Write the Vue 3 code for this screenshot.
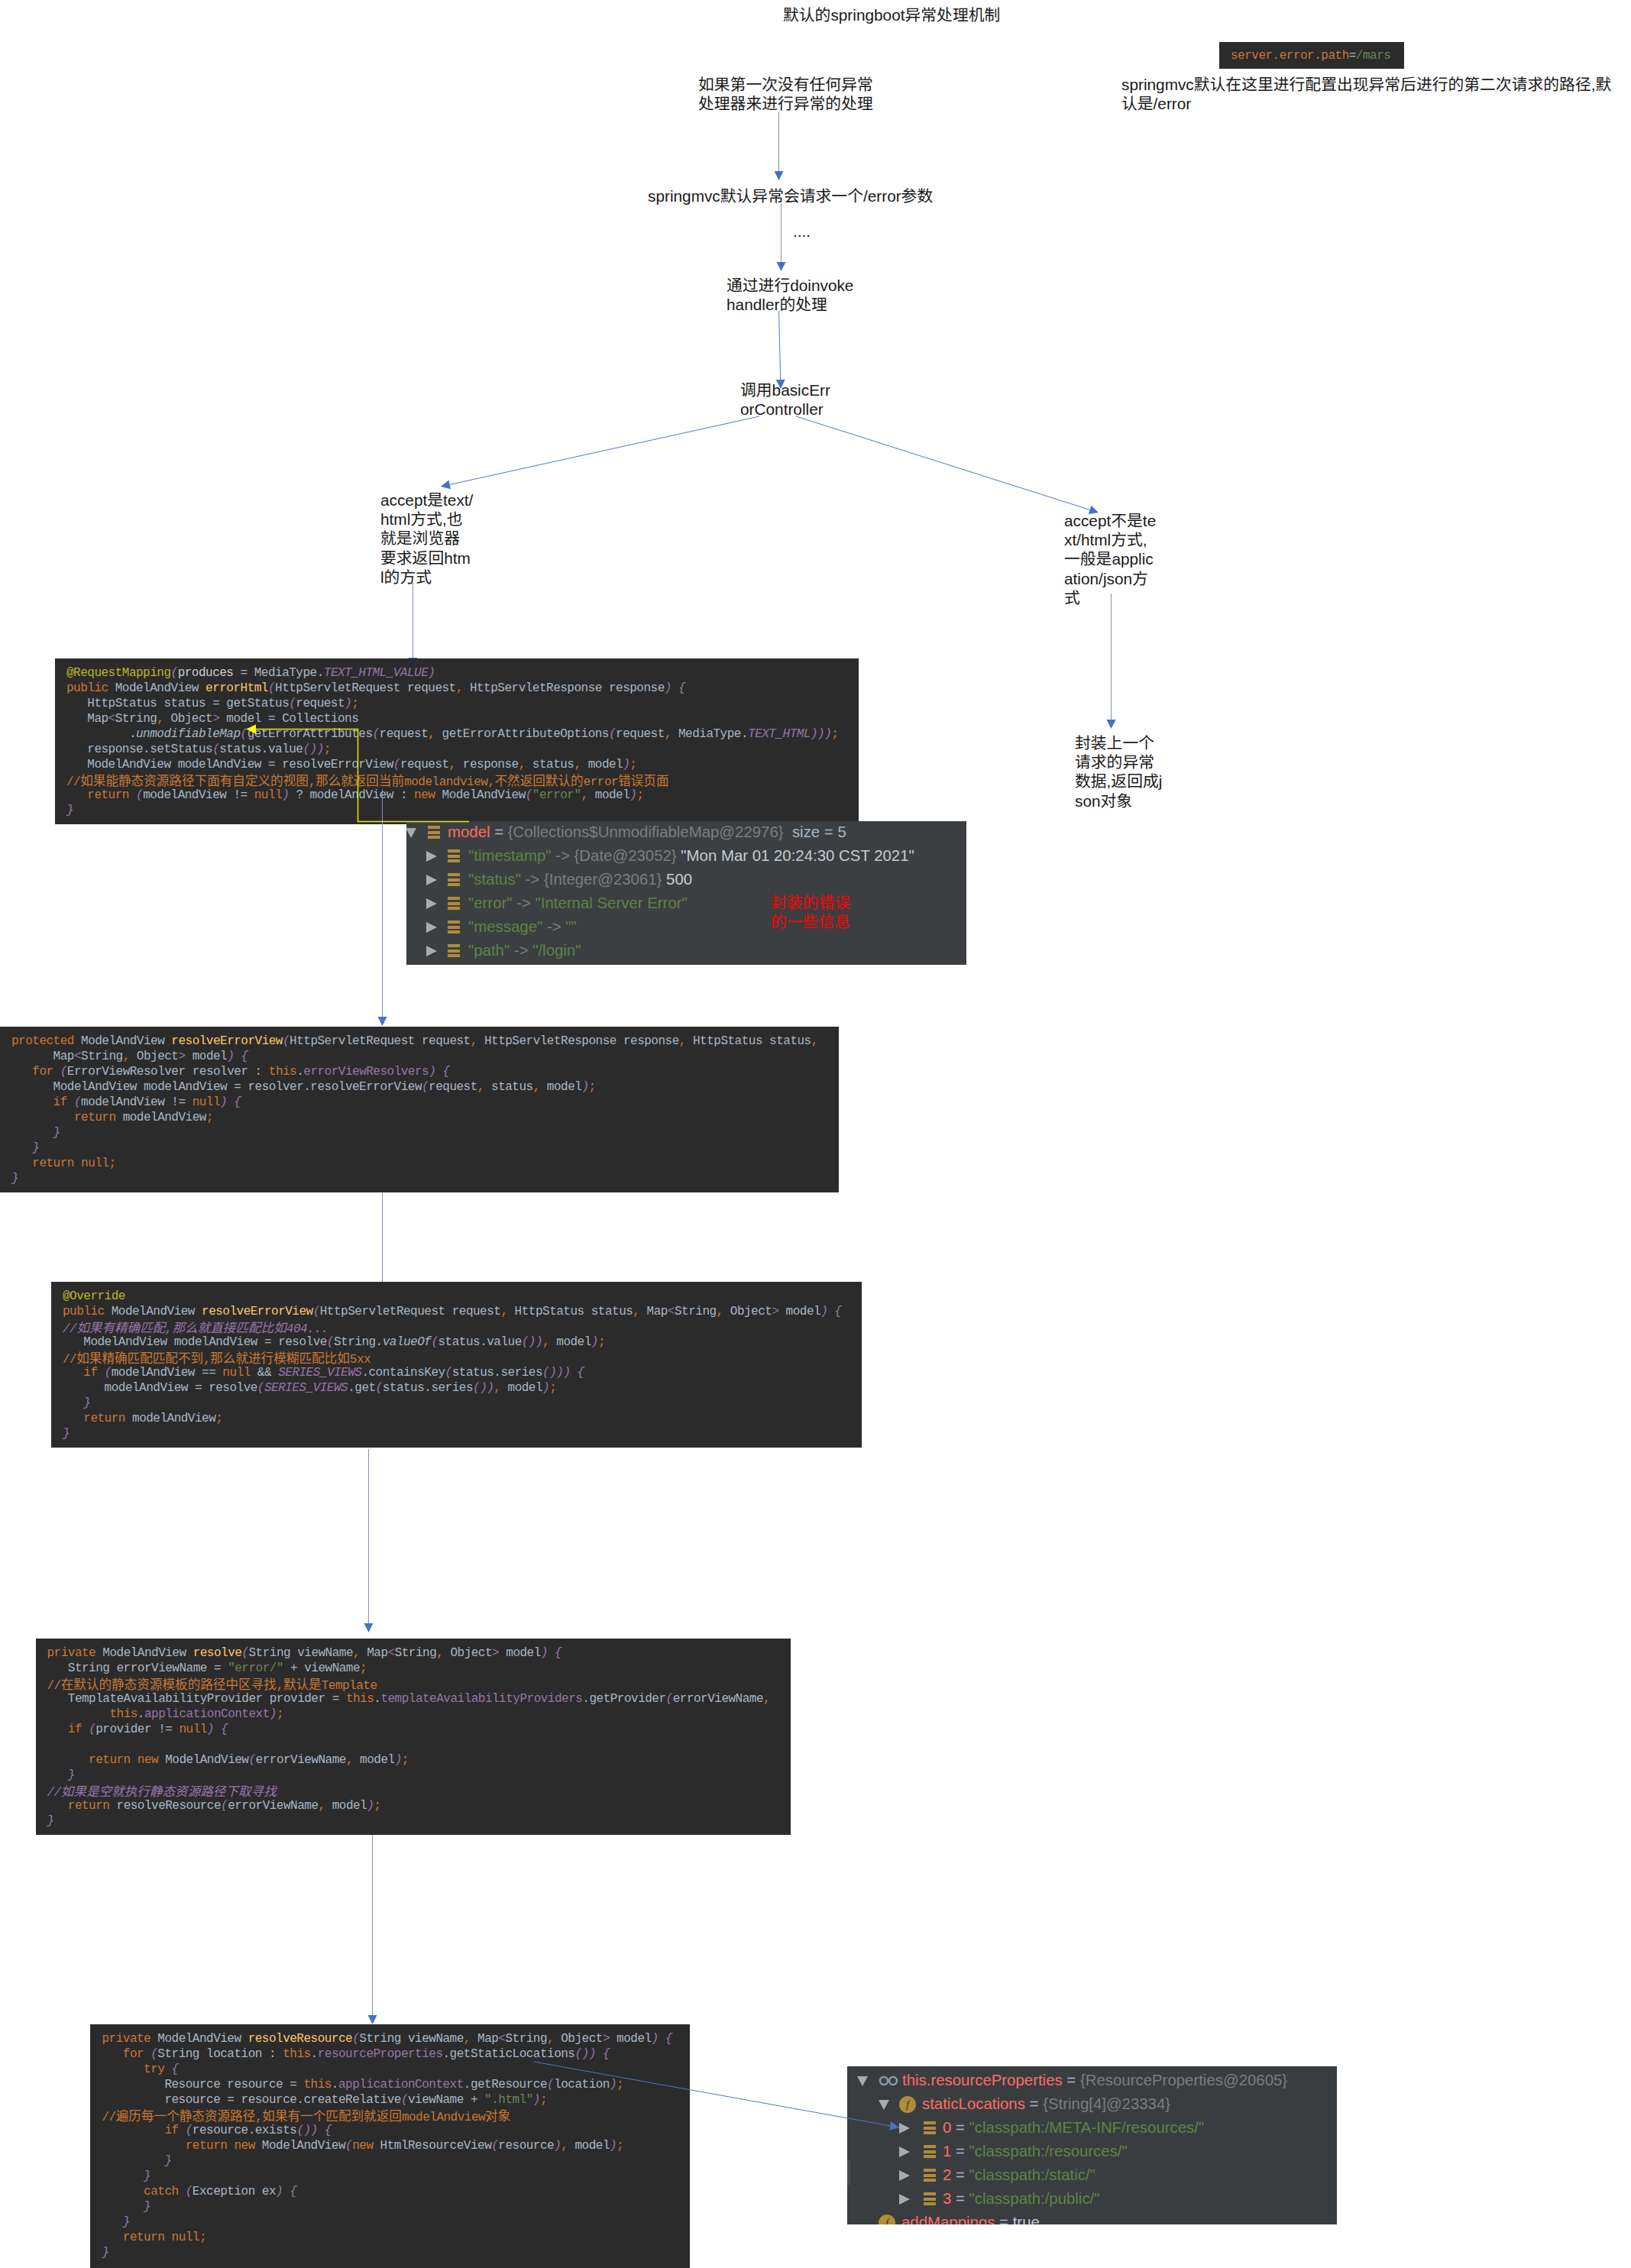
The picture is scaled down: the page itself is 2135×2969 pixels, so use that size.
<script setup>
const KW = 'public|private|protected|for|if|try|catch|return|new|null|this'
const RE = new RegExp(`§(\\w):([^§]*)§|"[^"]*"|\\b(?:${KW})\\b|@\\w+|[,;]|[(){}<>]|[\\u4e00-\\u9fff]+`, 'g')

function tokenize(src) {
  let base = 't'
  let text = src
  if (src.startsWith('#/')) { base = 'd'; text = src.slice(1) }
  else if (src.startsWith('//')) { base = 'c' }
  const out = []
  let last = 0
  const push = (cls, v) => { if (v) out.push({ cls, v }) }
  for (const m of text.matchAll(RE)) {
    push(base, text.slice(last, m.index))
    last = m.index + m[0].length
    const s = m[0]
    if (m[1]) push(m[1], m[2])
    else if (/^[\u4e00-\u9fff]/.test(s)) push(base + ' cjk', s)
    else if (base !== 't') push(base, s)
    else if (s[0] === '"') push('s', s)
    else if (s[0] === '@') push('a', s)
    else if (/^[(){}<>]$/.test(s)) push('p', s)
    else push('k', s)
  }
  push(base, text.slice(last))
  return out
}

const rawBlocks = [
  { id: 'b1', lines: [
    '@RequestMapping(§n:produces§ = MediaType.§f:TEXT_HTML_VALUE§)',
    'public ModelAndView §m:errorHtml§(HttpServletRequest request, HttpServletResponse response) {',
    '   HttpStatus status = getStatus(request);',
    '   Map<String, Object> model = Collections',
    '         .§i:unmodifiableMap§(getErrorAttributes(request, getErrorAttributeOptions(request, MediaType.§f:TEXT_HTML§)));',
    '   response.setStatus(status.value());',
    '   ModelAndView modelAndView = resolveErrorView(request, response, status, model);',
    '//如果能静态资源路径下面有自定义的视图,那么就返回当前modelandview,不然返回默认的error错误页面',
    '   return (modelAndView != null) ? modelAndView : new ModelAndView("error", model);',
    '}'
  ] },
  { id: 'b2', lines: [
    'protected ModelAndView §m:resolveErrorView§(HttpServletRequest request, HttpServletResponse response, HttpStatus status,',
    '      Map<String, Object> model) {',
    '   for (ErrorViewResolver resolver : this.§v:errorViewResolvers§) {',
    '      ModelAndView modelAndView = resolver.resolveErrorView(request, status, model);',
    '      if (modelAndView != null) {',
    '         return modelAndView;',
    '      }',
    '   }',
    '   return null;',
    '}'
  ] },
  { id: 'b3', lines: [
    '@Override',
    'public ModelAndView §m:resolveErrorView§(HttpServletRequest request, HttpStatus status, Map<String, Object> model) {',
    '#//如果有精确匹配,那么就直接匹配比如404...',
    '   ModelAndView modelAndView = resolve(String.§i:valueOf§(status.value()), model);',
    '//如果精确匹配匹配不到,那么就进行模糊匹配比如5xx',
    '   if (modelAndView == null && §f:SERIES_VIEWS§.containsKey(status.series())) {',
    '      modelAndView = resolve(§f:SERIES_VIEWS§.get(status.series()), model);',
    '   }',
    '   return modelAndView;',
    '}'
  ] },
  { id: 'b4', lines: [
    'private ModelAndView §m:resolve§(String viewName, Map<String, Object> model) {',
    '   String errorViewName = "error/" + viewName;',
    '//在默认的静态资源模板的路径中区寻找,默认是Template',
    '   TemplateAvailabilityProvider provider = this.§v:templateAvailabilityProviders§.getProvider(errorViewName,',
    '         this.§v:applicationContext§);',
    '   if (provider != null) {',
    ' ',
    '      return new ModelAndView(errorViewName, model);',
    '   }',
    '#//如果是空就执行静态资源路径下取寻找',
    '   return resolveResource(errorViewName, model);',
    '}'
  ] },
  { id: 'b5', lines: [
    'private ModelAndView §m:resolveResource§(String viewName, Map<String, Object> model) {',
    '   for (String location : this.§v:resourceProperties§.getStaticLocations()) {',
    '      try {',
    '         Resource resource = this.§v:applicationContext§.getResource(location);',
    '         resource = resource.createRelative(viewName + ".html");',
    '//遍历每一个静态资源路径,如果有一个匹配到就返回modelAndview对象',
    '         if (resource.exists()) {',
    '            return new ModelAndView(new HtmlResourceView(resource), model);',
    '         }',
    '      }',
    '      catch (Exception ex) {',
    '      }',
    '   }',
    '   return null;',
    '}'
  ] }
]
const blocks = rawBlocks.map(b => ({ id: b.id, lines: b.lines.map(tokenize) }))

const notes = [
  { id: 'n-title', lines: ['默认的springboot异常处理机制'] },
  { id: 'n-first', lines: ['如果第一次没有任何异常', '处理器来进行异常的处理'] },
  { id: 'n-config', lines: ['springmvc默认在这里进行配置出现异常后进行的第二次请求的路径,默', '认是/error'] },
  { id: 'n-request', lines: ['springmvc默认异常会请求一个/error参数'] },
  { id: 'n-dots', lines: ['....'] },
  { id: 'n-invoke', lines: ['通过进行doinvoke', 'handler的处理'] },
  { id: 'n-basic', lines: ['调用basicErr', 'orController'] },
  { id: 'n-html', lines: ['accept是text/', 'html方式,也', '就是浏览器', '要求返回htm', 'l的方式'] },
  { id: 'n-json', lines: ['accept不是te', 'xt/html方式,', '一般是applic', 'ation/json方', '式'] },
  { id: 'n-wrap', lines: ['封装上一个', '请求的异常', '数据,返回成j', 'son对象'] }
]

const modelRows = [
  { depth: 'd0', open: true, icon: 'bars', parts: [['red', 'model'], ['eq', ' = '], ['dim', '{Collections$UnmodifiableMap@22976}'], ['eq', '  size = 5']] },
  { depth: 'd1', icon: 'bars', parts: [['grn', '"timestamp"'], ['dim', ' -> {Date@23052} '], ['wht', '"Mon Mar 01 20:24:30 CST 2021"']] },
  { depth: 'd1', icon: 'bars', parts: [['grn', '"status"'], ['dim', ' -> {Integer@23061} '], ['wht', '500']] },
  { depth: 'd1', icon: 'bars', parts: [['grn', '"error"'], ['dim', ' -> '], ['grn', '"Internal Server Error"']] },
  { depth: 'd1', icon: 'bars', parts: [['grn', '"message"'], ['dim', ' -> '], ['grn', '""']] },
  { depth: 'd1', icon: 'bars', parts: [['grn', '"path"'], ['dim', ' -> '], ['grn', '"/login"']] }
]
const resourceRows = [
  { depth: 'r0', open: true, icon: 'glasses', parts: [['red', 'this.resourceProperties'], ['eq', ' = '], ['dim', '{ResourceProperties@20605}']] },
  { depth: 'r1', open: true, icon: 'f', parts: [['red', 'staticLocations'], ['eq', ' = '], ['dim', '{String[4]@23334}']] },
  { depth: 'r2', icon: 'bars', parts: [['red', '0'], ['eq', ' = '], ['grn', '"classpath:/META-INF/resources/"']] },
  { depth: 'r2', icon: 'bars', parts: [['red', '1'], ['eq', ' = '], ['grn', '"classpath:/resources/"']] },
  { depth: 'r2', icon: 'bars', parts: [['red', '2'], ['eq', ' = '], ['grn', '"classpath:/static/"']] },
  { depth: 'r2', icon: 'bars', parts: [['red', '3'], ['eq', ' = '], ['grn', '"classpath:/public/"']] },
  { depth: 'r1', leaf: true, icon: 'f', parts: [['red', 'addMappings'], ['eq', ' = '], ['wht', 'true']] }
]

function arrow(x1, y1, x2, y2, head = true, strong = false, len = 12, half = 6) {
  const dx = x2 - x1, dy = y2 - y1
  const d = Math.hypot(dx, dy) || 1
  const ux = dx / d, uy = dy / d
  const bx = x2 - ux * len, by = y2 - uy * len
  const pts = [
    [x2, y2],
    [bx - uy * half, by + ux * half],
    [bx + uy * half, by - ux * half]
  ].map(p => p.join(',')).join(' ')
  return { x1, y1, x2: head ? bx : x2, y2: head ? by : y2, pts: head ? pts : '', strong }
}

const under = [
  arrow(1019.5, 147, 1019.5, 236),
  arrow(1022.5, 266, 1022.5, 355),
  arrow(1019.5, 407, 1022, 509, true, true),
  arrow(994, 545, 577, 637, true, true),
  arrow(1042, 545, 1438, 671, true, true),
  arrow(540.5, 763, 540.5, 873),
  arrow(1454.5, 777, 1454.5, 954),
  arrow(500.5, 1033, 500.5, 1343),
  arrow(500.5, 1561, 500.5, 1678, false),
  arrow(482.5, 1897, 482.5, 2137),
  arrow(487.5, 2402, 487.5, 2650)
]
const over = [arrow(699, 2699, 1177, 2785, true, true)]
</script>

<template>
  <div class="canvas">
    <svg class="layer under" width="2135" height="2969" viewBox="0 0 2135 2969">
      <g v-for="(a, i) in under" :key="i">
        <line :x1="a.x1" :y1="a.y1" :x2="a.x2" :y2="a.y2" class="wire" :class="{ strong: a.strong }" />
        <polygon v-if="a.pts" :points="a.pts" class="head" />
      </g>
    </svg>

    <div v-for="n in notes" :key="n.id" class="note" :class="n.id">
      <div v-for="(l, i) in n.lines" :key="i">{{ l }}</div>
    </div>

    <div class="server">
      <span class="sv-k">server.error.path</span><span class="sv-e">=</span><span class="sv-v">/mars</span>
    </div>

    <div v-for="b in blocks" :key="b.id" class="code" :class="b.id">
      <div v-for="(line, i) in b.lines" :key="i" class="ln">
        <span v-for="(t, j) in line" :key="j" :class="t.cls">{{ t.v }}</span>
      </div>
    </div>

    <div class="panel model-panel">
      <div v-for="(r, i) in modelRows" :key="i" class="row" :class="r.depth">
        <svg class="tri" width="14" height="14" viewBox="0 0 14 14">
          <polygon v-if="r.open" points="0,1 14,1 7,14" />
          <polygon v-else points="0,0 14,7 0,14" />
        </svg>
        <span class="bars"><i></i><i></i><i></i></span>
        <span class="txt"><span v-for="(p, j) in r.parts" :key="j" :class="p[0]">{{ p[1] }}</span></span>
      </div>
      <div class="red-note">封装的错误<br />的一些信息</div>
    </div>

    <div class="panel resource-panel">
      <span class="strip"></span>
      <div v-for="(r, i) in resourceRows" :key="i" class="row" :class="r.depth">
        <svg v-if="!r.leaf" class="tri" width="14" height="14" viewBox="0 0 14 14">
          <polygon v-if="r.open" points="0,1 14,1 7,14" />
          <polygon v-else points="0,0 14,7 0,14" />
        </svg>
        <svg v-if="r.icon === 'glasses'" class="glasses" width="26" height="14" viewBox="0 0 26 14">
          <circle cx="7" cy="7" r="5" />
          <circle cx="19" cy="7" r="5" />
        </svg>
        <span v-else-if="r.icon === 'f'" class="ficon">f</span>
        <span v-else class="bars"><i></i><i></i><i></i></span>
        <span class="txt"><span v-for="(p, j) in r.parts" :key="j" :class="p[0]">{{ p[1] }}</span></span>
      </div>
    </div>

    <svg class="layer over" width="2135" height="2969" viewBox="0 0 2135 2969">
      <line x1="500.5" y1="1033" x2="500.5" y2="1079" class="wire" />
      <polyline points="614,1075.5 468.5,1075.5 468.5,954.5 334,954.5" class="yellow" />
      <polygon points="322,954.5 335,948.5 335,960.5" class="yellow-head" />
      <g v-for="(a, i) in over" :key="i">
        <line :x1="a.x1" :y1="a.y1" :x2="a.x2" :y2="a.y2" class="wire strong" />
        <polygon :points="a.pts" class="head" />
      </g>
    </svg>
  </div>
</template>

<style>
html, body { margin: 0; background: #fff; }
</style>

<style scoped>
.canvas {
  position: relative;
  width: 2135px;
  height: 2969px;
  overflow: hidden;
  background: #fff;
}
.layer { position: absolute; left: 0; top: 0; }
.under { z-index: 1; }
.over { z-index: 5; pointer-events: none; }
.wire { stroke: #7f93b8; stroke-width: 1; }
.wire.strong { stroke: #4f78c6; }
.head { fill: #4472c4; }
.yellow { fill: none; stroke: #e8e800; stroke-width: 1.5; }
.yellow-head { fill: #ffff00; }

.note {
  position: absolute;
  z-index: 2;
  font-family: "Liberation Sans", "Noto Sans CJK SC", sans-serif;
  font-size: 20.8px;
  line-height: 25.2px;
  color: #1a1a1a;
  white-space: nowrap;
}
.n-title { left: 1025px; top: 7px; }
.n-first { left: 914px; top: 98px; }
.n-config { left: 1468px; top: 98px; }
.n-request { left: 848px; top: 244px; }
.n-dots { left: 1038px; top: 290px; }
.n-invoke { left: 951px; top: 361px; }
.n-basic { left: 969px; top: 498px; }
.n-html { left: 498px; top: 642px; }
.n-json { left: 1393px; top: 669px; }
.n-wrap { left: 1407px; top: 960px; }

.server {
  position: absolute;
  z-index: 2;
  left: 1596px;
  top: 55px;
  width: 242px;
  height: 35px;
  box-sizing: border-box;
  padding: 1px 0 0 15px;
  background: #2b2b2b;
  font-family: "Liberation Mono", monospace;
  font-size: 16px;
  letter-spacing: -0.5px;
  line-height: 35px;
  white-space: pre;
}
.sv-k { color: #cc7832; }
.sv-e { color: #a9b7c6; }
.sv-v { color: #6a8759; }

.code {
  position: absolute;
  z-index: 2;
  box-sizing: border-box;
  background: #2b2b2b;
  padding-top: 9px;
  font-family: "Liberation Mono", "Noto Sans CJK SC", monospace;
  font-size: 16px;
  letter-spacing: -0.5px;
  line-height: 20px;
  color: #a9b7c6;
}
.ln { height: 20px; white-space: pre; }
.b1 { left: 72px; top: 862px; width: 1052px; height: 217px; padding-left: 15px; }
.b2 { left: 0; top: 1344px; width: 1098px; height: 217px; padding-left: 15px; }
.b3 { left: 67px; top: 1678px; width: 1061px; height: 217px; padding-left: 15px; }
.b4 { left: 47px; top: 2145px; width: 988px; height: 257px; padding-left: 14.5px; }
.b5 { left: 118px; top: 2650px; width: 785px; height: 319px; padding-left: 15.5px; }

.t { color: #a9b7c6; }
.k { color: #cc7832; }
.p { color: #9876aa; font-style: italic; }
.m { color: #ffc66d; }
.s { color: #6a8759; }
.a { color: #bbb529; }
.n { color: #c8cfd6; }
.v { color: #9876aa; }
.f { color: #9876aa; font-style: italic; }
.i { color: #a9b7c6; font-style: italic; }
.c { color: #cc7832; }
.d { color: #9876aa; font-style: italic; }
.cjk {
  font-family: "Noto Sans CJK SC", sans-serif;
  font-size: 16.6px;
  letter-spacing: 0;
}

.panel {
  position: absolute;
  z-index: 3;
  box-sizing: border-box;
  overflow: hidden;
  background: #3c3f41;
  font-family: "Liberation Sans", sans-serif;
  font-size: 20.4px;
}
.model-panel { left: 532px; top: 1075px; width: 733px; height: 188px; }
.model-panel .row:first-child { margin-top: -1px; }
.resource-panel { left: 1109px; top: 2705px; width: 641px; height: 207px; padding-top: 3px; background: #3a3d40; }
.row {
  display: flex;
  align-items: center;
  height: 31px;
  white-space: pre;
  box-sizing: border-box;
}
.d0 { margin-left: -1px; }
.d1 { padding-left: 26px; }
.r0 { padding-left: 13px; }
.r1 { padding-left: 41px; }
.r2 { padding-left: 68px; }
.tri { flex: none; margin-right: 14px; }
.tri polygon { fill: #a8acaf; }
.d0 .tri { margin-right: 15px; }
.bars {
  flex: none;
  display: flex;
  flex-direction: column;
  justify-content: space-between;
  width: 16px;
  height: 17px;
  margin-right: 10px;
}
.d1 .bars { margin-right: 11px; }
.bars i { display: block; height: 4px; background: #b08c3c; }
.glasses { flex: none; margin-right: 5px; }
.glasses circle { fill: none; stroke: #8c9aa3; stroke-width: 2.5; }
.ficon {
  flex: none;
  width: 22px;
  height: 22px;
  margin-right: 8px;
  border-radius: 50%;
  background: #b08c3c;
  color: #4a3a10;
  font-family: "Liberation Serif", serif;
  font-style: italic;
  font-size: 15px;
  line-height: 22px;
  text-align: center;
}
.r1 .tri { margin-right: 13px; }
.r2 .tri { margin-right: 18px; }
.r2 .bars { margin-right: 9px; }
.red { color: #ff6b68; }
.eq { color: #a9b7c6; }
.dim { color: #7a7e80; }
.grn { color: #5f8248; }
.wht { color: #c5ccd2; }
.red-note {
  position: absolute;
  left: 477px;
  top: 93px;
  font-family: "Noto Sans CJK SC", sans-serif;
  font-size: 20.8px;
  line-height: 25px;
  color: #ff0000;
}
.strip {
  position: absolute;
  left: 0;
  top: 122px;
  width: 4px;
  height: 33px;
  background: #4a4d4f;
}
</style>
